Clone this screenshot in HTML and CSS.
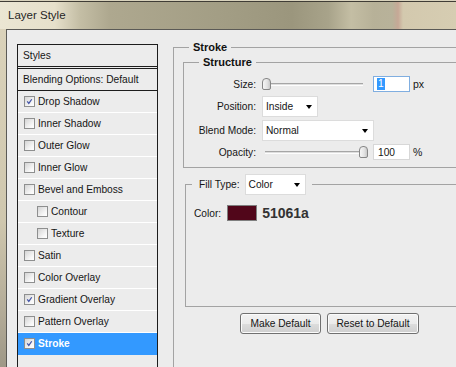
FILE: index.html
```html
<!DOCTYPE html>
<html lang="en">
<head>
    <meta charset="UTF-8">
    <meta name="viewport" content="width=device-width, initial-scale=1.0">
    <title>Layer Style</title>
    <link rel="stylesheet" href="styles.css">
</head>
<body>
    <div class="window">
        <div class="titlebar">Layer Style</div>
        <div class="frame">
            <div class="dialog">
                <div class="styles-list">
                    <div class="list-head">Styles</div>
                    <div class="list-blend">Blending Options: Default</div>
                    <ul class="effects">
                        <li class="effect"><span class="check on"><svg viewBox="0 0 9 9"><path d="M1.6 4.4 L3.6 6.9 L7.4 1.6"/></svg></span>Drop Shadow</li>
                        <li class="effect"><span class="check"></span>Inner Shadow</li>
                        <li class="effect"><span class="check"></span>Outer Glow</li>
                        <li class="effect"><span class="check"></span>Inner Glow</li>
                        <li class="effect"><span class="check"></span>Bevel and Emboss</li>
                        <li class="effect sub"><span class="check"></span>Contour</li>
                        <li class="effect sub"><span class="check"></span>Texture</li>
                        <li class="effect"><span class="check"></span>Satin</li>
                        <li class="effect"><span class="check"></span>Color Overlay</li>
                        <li class="effect"><span class="check on"><svg viewBox="0 0 9 9"><path d="M1.6 4.4 L3.6 6.9 L7.4 1.6"/></svg></span>Gradient Overlay</li>
                        <li class="effect"><span class="check"></span>Pattern Overlay</li>
                        <li class="effect selected"><span class="check on"><svg viewBox="0 0 9 9"><path d="M1.6 4.4 L3.6 6.9 L7.4 1.6"/></svg></span>Stroke</li>
                    </ul>
                </div>

                <div class="settings">
                    <fieldset class="group stroke">
                        <legend>Stroke</legend>

                        <fieldset class="group structure">
                            <legend>Structure</legend>
                            <div class="rows">
                                <div class="row">
                                    <span class="label">Size:</span>
                                    <div class="slider">
                                        <span class="thumb"></span>
                                        <span class="track"></span>
                                    </div>
                                    <span class="input focus"><span class="selected-text">1</span></span>
                                    <span class="unit">px</span>
                                </div>
                                <div class="row">
                                    <span class="label">Position:</span>
                                    <span class="select position">Inside<i class="arrow"></i></span>
                                </div>
                                <div class="row">
                                    <span class="label">Blend Mode:</span>
                                    <span class="select blend">Normal<i class="arrow"></i></span>
                                </div>
                                <div class="row">
                                    <span class="label">Opacity:</span>
                                    <div class="slider end">
                                        <span class="track"></span>
                                        <span class="thumb"></span>
                                    </div>
                                    <span class="input">100</span>
                                    <span class="unit">%</span>
                                </div>
                            </div>
                        </fieldset>

                        <fieldset class="group fill">
                            <legend>
                                <span class="legend-label">Fill Type:</span>
                                <span class="select filltype">Color<i class="arrow"></i></span>
                            </legend>
                            <div class="fill-body">
                                <div class="color-row">
                                    <span>Color:</span>
                                    <span class="swatch"></span>
                                    <span class="hex">51061a</span>
                                </div>
                            </div>
                        </fieldset>

                        <div class="buttons">
                            <button class="btn make">Make Default</button>
                            <button class="btn reset">Reset to Default</button>
                        </div>
                    </fieldset>
                </div>
            </div>
        </div>
    </div>
</body>
</html>
```

FILE: styles.css
```css
* {
    margin: 0;
    padding: 0;
    box-sizing: border-box;
}

html, body {
    width: 456px;
    height: 367px;
    overflow: hidden;
}

body {
    font-family: "Liberation Sans", Arial, sans-serif;
    font-size: 10.2px;
    color: #151515;
    background: #ececec;
}

.window {
    display: flex;
    flex-direction: column;
    height: 367px;
    background: linear-gradient(#dcd4bc 0%, #cfc7ae 60%, #b3ab97 85%, #9e9887 100%);
}

.titlebar {
    flex: none;
    height: 29px;
    padding-left: 8px;
    line-height: 28px;
    font-size: 11.5px;
    color: #262626;
    border-top: 1px solid #d8d2bc;
    box-shadow: inset 0 1px 0 #403d36;
    background: linear-gradient(90deg,
        #ebe6d3 0%, #e6e0cb 12%, #c4bea5 17.5%, #aea88f 24%,
        #a29d84 50%, #9b967d 64%, #a8a38a 72%, #c4bea4 77%,
        #b7b198 82%, #b8b29a 86%, #c6a896 87.3%, #d3c9ae 88.4%, #d6cdb2 100%);
}

.frame {
    flex: 1;
    display: flex;
    padding-left: 6px;
    min-height: 0;
}

.dialog {
    flex: 1;
    display: flex;
    gap: 15px;
    padding: 14px 0 0 10px;
    background: #ececec;
    border-left: 1px solid #5b5a56;
    border-top: 1px solid #5b5a56;
    overflow: hidden;
}

/* styles list */
.styles-list {
    flex: none;
    width: 141px;
    height: 400px;
    border: 1px solid #1d1d1d;
}
.list-head {
    height: 24px;
    line-height: 21px;
    padding-left: 5px;
    border-bottom: 3px double #1d1d1d;
}
.list-blend {
    height: 22px;
    line-height: 21px;
    padding-left: 5px;
    border-bottom: 1px solid #1d1d1d;
}
.effects {
    list-style: none;
}
.effect {
    display: flex;
    align-items: center;
    gap: 3px;
    height: 22px;
    padding-left: 6px;
    border-bottom: 1px solid #fff;
}
.effect.sub {
    padding-left: 19px;
}
.effect.selected {
    background: #3399ff;
    color: #fff;
    font-weight: bold;
    border-bottom-color: #3399ff;
}
.check {
    flex: none;
    display: flex;
    width: 11px;
    height: 11px;
    padding: 1px;
    border: 1px solid #8e8f8f;
    background: linear-gradient(135deg, #d4d4d4, #f7f7f7 70%, #fff);
}
.check svg {
    width: 7px;
    height: 7px;
}
.check path {
    fill: none;
    stroke: #4253a6;
    stroke-width: 1.6;
}

/* settings groups */
.settings {
    flex: none;
    width: 320px;
    margin-top: -4px;
}
.group {
    border: 1px solid #a3a3a3;
    padding: 0;
    min-width: 0;
}
.group legend {
    padding: 0 4px;
    line-height: 14px;
    font-weight: bold;
    font-size: 11px;
    color: #111;
}
.stroke {
    height: 360px;
}
.stroke > legend {
    margin-left: 15px;
}
.structure {
    margin: 1px 0 0 9px;
    padding-bottom: 7px;
}
.structure > legend {
    margin-left: 15px;
}
.rows {
    display: flex;
    flex-direction: column;
    gap: 3px;
    padding-top: 7px;
}
.row {
    display: flex;
    align-items: center;
}
.row:first-child {
    margin-bottom: 1px;
}
.label {
    width: 72px;
    margin-right: 6px;
    text-align: right;
}

.slider {
    display: flex;
    align-items: center;
    width: 106px;
    height: 16px;
    margin-right: 5px;
}
.slider .track {
    flex: 1;
    height: 3px;
    margin-right: 5px;
    background: #dedede;
    border-top: 1px solid #a6a6a6;
    border-bottom: 1px solid #fdfdfd;
}
.slider.end {
    padding-left: 3px;
}
.slider.end .track {
    margin-right: 0;
}
.thumb {
    flex: none;
    width: 9px;
    height: 12px;
    border: 1px solid #878787;
    border-radius: 4px 4px 2px 2px;
    background: linear-gradient(90deg, #f6f6f6, #e3e3e3 60%, #c9c9c9);
}

.input {
    display: flex;
    align-items: center;
    width: 37px;
    height: 16px;
    padding-left: 4px;
    background: #fff;
    border: 1px solid #d7d7d7;
    margin-right: 3px;
}
.input.focus {
    border-color: #80aee0;
}
.selected-text {
    background: #3399ff;
    color: #fff;
    padding: 0 1px;
    margin-left: -1px;
    line-height: 12px;
}
.unit {
    font-size: 10.5px;
}

.select {
    position: relative;
    display: flex;
    align-items: center;
    height: 21px;
    padding-left: 3px;
    background: #fff;
    border: 1px solid #dcdcdc;
    font-weight: normal;
    font-size: 10.2px;
    color: #151515;
}
.select.position {
    width: 56px;
}
.select.blend {
    width: 112px;
}
.select.filltype {
    width: 61px;
}
.arrow {
    position: absolute;
    right: 5px;
    top: 8px;
    width: 0;
    height: 0;
    border-top: 4px solid #000;
    border-left: 3.5px solid transparent;
    border-right: 3.5px solid transparent;
}

.fill {
    margin: 6px 0 0 11px;
}
.fill > legend {
    display: flex;
    align-items: center;
    gap: 5px;
    margin-left: 6px;
    padding: 0 6px 0 7px;
    line-height: 21px;
}
.legend-label {
    font-weight: normal;
    font-size: 10.2px;
    color: #151515;
}
.fill-body {
    height: 111px;
    padding: 10px 0 0 8px;
}
.color-row {
    display: flex;
    align-items: center;
}
.swatch {
    width: 30px;
    height: 16px;
    margin: 0 5px 0 6px;
    background: #51061a;
    border: 1px solid #7f7f7f;
}
.hex {
    font-size: 14px;
    font-weight: bold;
    color: #333;
}

.buttons {
    display: flex;
    gap: 6px;
    margin: 6px 0 0 66px;
}
.btn {
    height: 21px;
    font-family: "Liberation Sans", Arial, sans-serif;
    font-size: 10.2px;
    color: #151515;
    border: 1px solid #707070;
    border-radius: 3px;
    background: linear-gradient(#f2f2f2 0%, #ebebeb 50%, #dddddd 51%, #cfcfcf 100%);
    box-shadow: inset 0 0 0 1px #fbfbfb;
}
.btn.make {
    width: 81px;
}
.btn.reset {
    width: 92px;
}
```
